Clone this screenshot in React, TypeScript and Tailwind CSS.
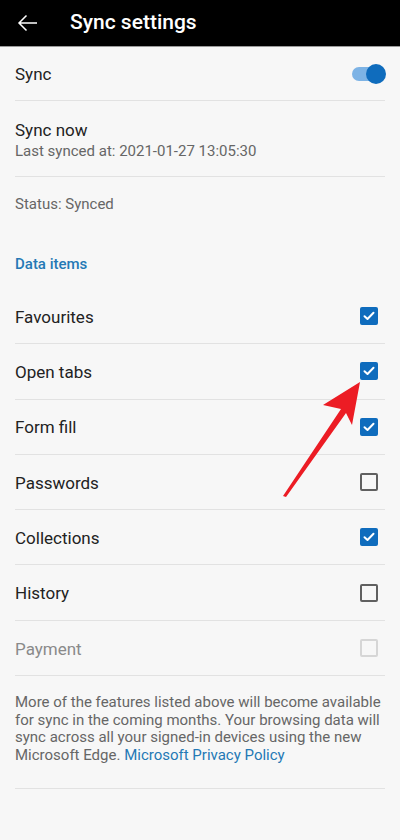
import React from 'react';

const items = [
  { name: 'Favourites', checked: true },
  { name: 'Open tabs', checked: true },
  { name: 'Form fill', checked: true },
  { name: 'Passwords', checked: false },
  { name: 'Collections', checked: true },
  { name: 'History', checked: false },
  { name: 'Payment', checked: false, disabled: true },
];

const CheckBox = ({ checked, disabled }: { checked: boolean; disabled?: boolean }) => {
  if (checked) {
    return (
      <div className="flex h-[18px] w-[18px] items-center justify-center rounded-[2px] bg-[#0f6cbd]">
        <svg width="12" height="10" viewBox="0 0 12 10" fill="none">
          <path d="M1.5 5.2 L4.5 8 L10.5 1.8" stroke="white" strokeWidth="2" strokeLinecap="round" strokeLinejoin="round" />
        </svg>
      </div>
    );
  }
  return (
    <div
      className={
        disabled
          ? 'h-[18px] w-[18px] rounded-[2px] border-2 border-[#d6d6d6]'
          : 'h-[18px] w-[18px] rounded-[2px] border-2 border-[#606060]'
      }
    />
  );
};

export default function App() {
  return (
    <div className="relative min-h-[840px] w-[400px] bg-[#f7f7f7] font-['Roboto',sans-serif] text-[#222]">
      {/* top bar */}
      <div className="flex h-[47px] items-center bg-black border-b border-[#9a9a9a]">
        <div className="flex w-[70px] items-center pl-[17px]">
          <svg width="21" height="18" viewBox="0 0 21 18" fill="none">
            <path d="M20 9 H2 M9.5 1.5 L2 9 L9.5 16.5" stroke="white" strokeWidth="1.5" />
          </svg>
        </div>
        <h1 className="text-[21px] font-medium text-white">Sync settings</h1>
      </div>

      <div className="px-[15px]">
        {/* sync toggle */}
        <div className="flex h-[54px] items-center justify-between pt-[3px] border-b border-[#e2e2e2]">
          <span className="text-[17px]">Sync</span>
          <div className="relative mr-[1px] mb-[3px] h-[14px] w-[32px] rounded-full bg-[#7db3e5]">
            <div className="absolute right-[-2px] top-[-3px] h-[20px] w-[20px] rounded-full bg-[#0f6cbd]" />
          </div>
        </div>

        <div className="flex h-[76px] flex-col justify-center pt-[4px] border-b border-[#e2e2e2]">
          <span className="text-[17px] leading-[21px]">Sync now</span>
          <span className="text-[15px] leading-[20px] text-[#666]">Last synced at: 2021-01-27 13:05:30</span>
        </div>

        <div className="flex h-[52px] items-center pt-[2px] text-[15px] text-[#666]">Status: Synced</div>

        <div className="flex h-[60px] items-center pt-[10px] text-[15px] font-medium text-[#2479b5]">Data items</div>

        {items.map((it) => (
          <div key={it.name} className="flex h-[55.3px] items-center justify-between pt-[3px] border-b border-[#e2e2e2]">
            <span className={it.disabled ? 'text-[17px] text-[#8a8a8a]' : 'text-[17px]'}>{it.name}</span>
            <div className="mr-[7px] mb-[3px]">
              <CheckBox checked={it.checked} disabled={it.disabled} />
            </div>
          </div>
        ))}

        <div className="border-b border-[#e2e2e2] pb-[24px] pt-[18px]">
          <p className="text-[15px] leading-[17.5px] text-[#666]">
            More of the features listed above will become available for sync in the coming months. Your browsing data will sync across all your signed-in devices using the new Microsoft Edge.{' '}
            <span className="text-[#2479b5]">Microsoft Privacy Policy</span>
          </p>
        </div>
      </div>

      {/* red arrow annotation */}
      <svg className="pointer-events-none absolute left-0 top-0" width="400" height="840" viewBox="0 0 400 840">
        <polygon points="283,496 341,409 323,405 360,382 352,425 346,413 286,497" fill="#ec1c24" />
      </svg>
    </div>
  );
}
